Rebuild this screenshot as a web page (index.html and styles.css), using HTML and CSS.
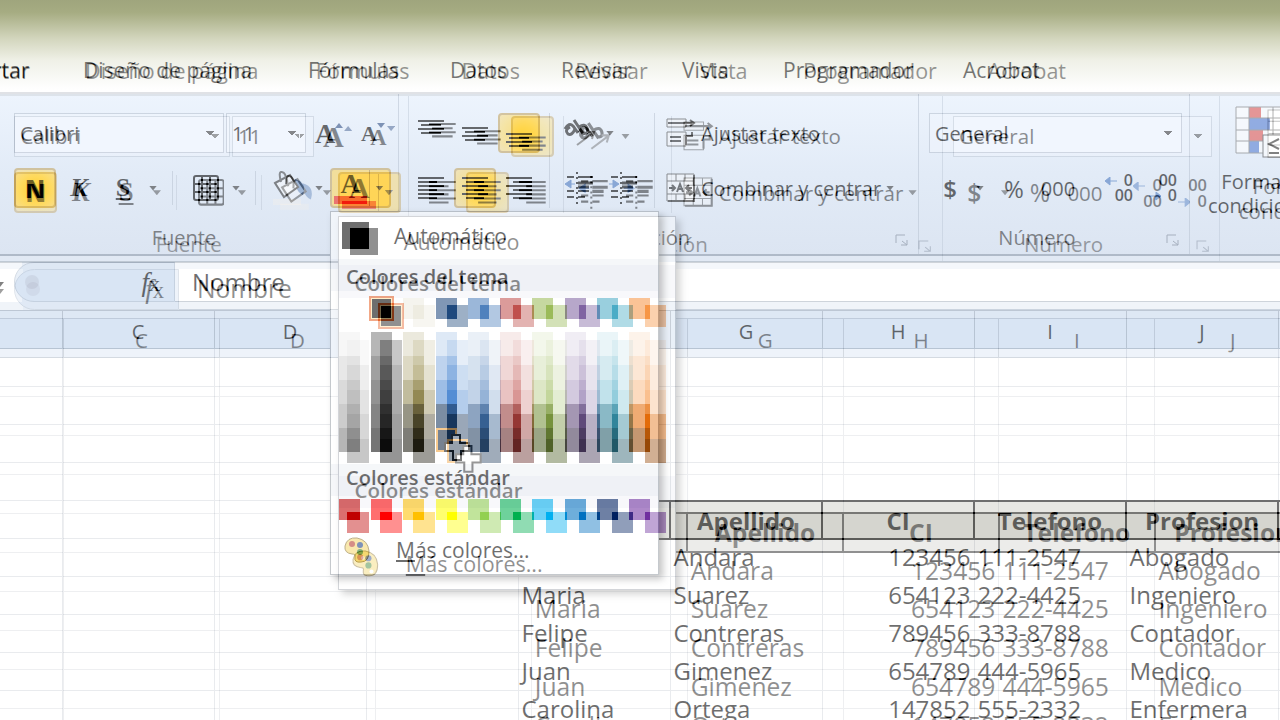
FILE: index.html
```
<!DOCTYPE html>
<html lang="es">
<head>
  <meta charset="UTF-8">
  <meta name="viewport" content="width=device-width, initial-scale=1.0">
  <title>Hoja de datos</title>
  <link rel="stylesheet" href="styles.css">
</head>
<body>

  <div class="frame">

    <!-- Ribbon tabs -->
    <nav class="tabs">
      <a href="#">rtar</a>
      <a href="#">Diseño de página</a>
      <a href="#">Fórmulas</a>
      <a href="#">Datos</a>
      <a href="#">Revisar</a>
      <a href="#">Vista</a>
      <a href="#">Programador</a>
      <a href="#">Acrobat</a>
    </nav>

    <div class="ribbon">

      <!-- Fuente -->
      <section class="group font-group">
        <div class="rows">
          <div class="row">
            <select class="combo font-name" aria-label="Fuente"><option>Calibri</option></select>
            <select class="combo font-size" aria-label="Tamaño"><option>11</option></select>
            <button class="tool grow" aria-label="Aumentar fuente">
              <span class="serif big">A</span><svg width="8" height="5"><path d="M0 5L4 0L8 5Z" fill="#2c4a80"/></svg>
            </button>
            <button class="tool shrink" aria-label="Disminuir fuente">
              <span class="serif small">A</span><svg width="8" height="5"><path d="M0 0L4 5L8 0Z" fill="#2c4a80"/></svg>
            </button>
          </div>
          <div class="row">
            <button class="tool active bold">N</button>
            <button class="tool serif italic">K</button>
            <button class="tool serif underline">S</button>
            <button class="caret" aria-label="Subrayado"></button>
            <span class="sep"></span>
            <button class="tool" aria-label="Bordes">
              <svg width="26" height="26" viewBox="0 0 26 26" fill="none" stroke="#000" stroke-width="2"><rect x="1" y="1" width="24" height="24" rx="2"/><path d="M9 1V25M17 1V25M1 9H25M1 17H25"/></svg>
            </button>
            <button class="caret" aria-label="Más bordes"></button>
            <span class="sep"></span>
            <button class="tool" aria-label="Color de relleno">
              <svg width="36" height="34" viewBox="0 0 36 34"><path d="M2 28H30V34H2Z" fill="#eee"/><path d="M24 8Q36 11 32 24Q27 22 24 14Z" fill="#5e83b8"/><path d="M4 12L19 4L27 16L13 26Z" fill="#f6f9fd" stroke="#333" stroke-width="2"/><path d="M10 11Q7 0 11 1Q16 2 15 13" fill="none" stroke="#444" stroke-width="2"/></svg>
            </button>
            <button class="caret" aria-label="Más rellenos"></button>

            <div class="split">
              <button class="color-btn" aria-label="Color de fuente"><span class="serif">A</span><i></i></button>
              <button class="caret" aria-label="Elegir color"></button>

              <!-- Font colour menu -->
              <div class="menu">
                <button class="menu-item auto"><i class="auto-color"></i><span>Automático</span></button>
                <h3>Colores del tema</h3>
                <div class="swatches theme"></div>
                <div class="swatches shades"></div>
                <h3 class="standard-title">Colores estándar</h3>
                <div class="swatches standard"></div>
                <button class="menu-item more">
                  <svg width="28" height="28" viewBox="0 0 28 28"><path d="M2 10Q4 1 14 2Q25 4 26 15Q26 26 18 26Q11 27 12 21Q13 18 9 18Q1 17 2 10Z" fill="#f5d870" stroke="#8b7230"/><circle cx="9" cy="8" r="3" fill="#b5392b"/><circle cx="17" cy="9" r="3" fill="#1c3f85"/><circle cx="17" cy="16" r="3" fill="#2b7a25"/><circle cx="20" cy="22" r="2" fill="#fff"/></svg>
                  <span><u>M</u>ás colores...</span>
                </button>
                <svg class="cursor" width="28" height="30" viewBox="0 0 28 30"><path d="M9 2H17V10H26V18H18V27H10V18H2V10H9Z" fill="#fff" stroke="#111" stroke-width="2"/></svg>
              </div>
            </div>
          </div>
        </div>
        <footer>Fuente<svg class="launcher" width="13" height="12"><path d="M1 9V1H10M7 7L12 11M12 6V11H6" fill="none" stroke="#7c8798"/></svg></footer>
      </section>

      <!-- Alineación -->
      <section class="group align-group">
        <div class="cols">
          <div class="rows">
            <div class="row">
              <button class="tool" aria-label="Alinear arriba"><svg width="28" height="30"><path d="M1 3H27M4 7H24M1 11H27M4 15H24" stroke="#000" stroke-width="2"/></svg></button>
              <button class="tool" aria-label="Alinear en el medio"><svg width="28" height="30"><path d="M1 10H27M4 14H24M1 18H27M4 22H24" stroke="#000" stroke-width="2"/></svg></button>
              <button class="tool active" aria-label="Alinear abajo"><svg width="28" height="30"><path d="M1 16H27M4 20H24M1 24H27M4 28H24" stroke="#000" stroke-width="2"/></svg></button>
            </div>
            <div class="row">
              <button class="tool" aria-label="Izquierda"><svg width="28" height="24"><path d="M1 2H27M1 6H20M1 10H27M1 14H20M1 18H27M1 22H20" stroke="#000" stroke-width="2"/></svg></button>
              <button class="tool active" aria-label="Centrar"><svg width="28" height="24"><path d="M1 2H27M5 6H23M1 10H27M5 14H23M1 18H27M5 22H23" stroke="#000" stroke-width="2"/></svg></button>
              <button class="tool" aria-label="Derecha"><svg width="28" height="24"><path d="M1 2H27M8 6H27M1 10H27M8 14H27M1 18H27M8 22H27" stroke="#000" stroke-width="2"/></svg></button>
            </div>
          </div>
          <span class="tall-sep"></span>
          <div class="rows">
            <div class="row">
              <button class="tool" aria-label="Orientación"><svg width="36" height="32" fill="none" stroke="#111"><path d="M3 12Q7 5 11 9L16 16M8 10Q2 13 6 17Q10 19 13 12M12 3L22 18M17 10Q23 6 25 11Q27 18 20 16" stroke-width="3"/><path d="M15 28L31 16M25 15L32 15L30 22" stroke="#666" stroke-width="2"/></svg></button>
              <button class="caret" aria-label="Más orientación"></button>
            </div>
            <div class="row">
              <button class="tool" aria-label="Disminuir sangría"><svg width="30" height="32" fill="none" stroke="#000" stroke-width="2"><path d="M12 0V32" stroke-dasharray="2 3"/><path d="M2 5H9M13 5H28M13 19H24M2 19H9M2 25H9M13 25H20"/><path d="M13 11H28M13 15H24" stroke-width="3"/><path d="M0 12L6 8V16ZM5 12H10" fill="#4574bd" stroke="#4574bd" stroke-width="1"/></svg></button>
              <button class="tool" aria-label="Aumentar sangría"><svg width="30" height="32" fill="none" stroke="#000" stroke-width="2"><path d="M12 0V32" stroke-dasharray="2 3"/><path d="M2 5H9M13 5H28M13 19H24M2 19H9M2 25H9M13 25H20"/><path d="M13 11H28M13 15H24" stroke-width="3"/><path d="M10 12L4 8V16ZM0 12H5" fill="#4574bd" stroke="#4574bd" stroke-width="1"/></svg></button>
            </div>
          </div>
          <span class="tall-sep"></span>
          <div class="rows wide">
            <div class="row">
              <button class="text-tool"><svg width="34" height="30" fill="none" stroke="#444"><path d="M1 1H20V9H1ZM1 14H20V28H1Z" fill="#f4f6f9"/><path d="M2 5H26M24 2L28 5L24 8M4 19H15M4 23H15M20 27V18M20 18H26V14" stroke="#222" stroke-width="2"/></svg>Ajustar texto</button>
            </div>
            <div class="row">
              <button class="text-tool"><svg width="34" height="30" fill="none" stroke="#444"><path d="M1 1H28V28H1ZM1 8H28M1 21H28M10 1V8M19 1V8M10 21V28M19 21V28" fill="#f4f6f9"/><path d="M28 2V28H2M3 15H8M26 15H21M6 12L9 15L6 18M23 12L20 15L23 18M11 19L14 11L17 19M12 16H17" stroke="#222" stroke-width="2"/></svg>Combinar y centrar</button>
              <button class="caret" aria-label="Más combinar"></button>
            </div>
          </div>
        </div>
        <footer>Alineación<svg class="launcher" width="13" height="12"><path d="M1 9V1H10M7 7L12 11M12 6V11H6" fill="none" stroke="#7c8798"/></svg></footer>
      </section>

      <!-- Número -->
      <section class="group number-group">
        <div class="rows">
          <div class="row">
            <select class="combo number-format" aria-label="Formato de número"><option>General</option></select>
          </div>
          <div class="row">
            <button class="tool currency">$</button>
            <button class="caret" aria-label="Más monedas"></button>
            <button class="tool percent">%</button>
            <button class="tool thousands">000</button>
            <button class="tool decimals" aria-label="Aumentar decimales"><span><svg width="12" height="9"><path d="M12 4H4M5 0L0 4L5 8Z" fill="#4574bd" stroke="#4574bd"/></svg>0</span><span>00</span></button>
            <button class="tool decimals" aria-label="Disminuir decimales"><span>00</span><span><svg width="12" height="9"><path d="M0 4H8M7 0L12 4L7 8Z" fill="#4574bd" stroke="#4574bd"/></svg>0</span></button>
          </div>
        </div>
        <footer>Número<svg class="launcher" width="13" height="12"><path d="M1 9V1H10M7 7L12 11M12 6V11H6" fill="none" stroke="#7c8798"/></svg></footer>
      </section>

      <!-- Estilos -->
      <section class="group style-group">
        <button class="large-tool">
          <svg width="52" height="52" viewBox="0 0 52 52"><path d="M1 1H51V47H1Z" fill="#fff"/><path d="M14 1H26V12H14ZM14 24H28V35H14Z" fill="#e0504a"/><path d="M14 12H35V24H14ZM14 35H24V47H14Z" fill="#4f78cf"/><path d="M1 1H51V47H1ZM1 12H51M1 24H51M1 35H51M14 1V47M38 1V47" fill="none" stroke="#777"/><rect x="28" y="29" width="22" height="22" fill="#fff" stroke="#444"/><path d="M44 33L34 38L44 43M34 47H44" fill="none" stroke="#222" stroke-width="2"/></svg>
          <span>Formato</span>
          <span>condicional</span>
        </button>
      </section>
    </div>

    <!-- Formula bar -->
    <div class="formula-bar">
      <span class="name-box"><i></i></span>
      <span class="fx-area"><i class="knob"></i><button class="fx"><i>f</i>x</button></span>
      <input class="formula" type="text" value="Nombre" aria-label="Barra de fórmulas">
    </div>

    <table class="sheet">
      <colgroup><col class="first"><col><col><col><col><col><col><col><col><col></colgroup>
      <thead>
        <tr><th></th><th>C</th><th>D</th><th>E</th><th>F</th><th>G</th><th>H</th><th>I</th><th>J</th><th>K</th></tr>
      </thead>
      <tbody>
        <tr><td></td><td></td><td></td><td></td><td></td><td></td><td></td><td></td><td></td><td></td></tr>
        <tr><td></td><td></td><td></td><td></td><td></td><td></td><td></td><td></td><td></td><td></td></tr>
        <tr><td></td><td></td><td></td><td></td><td></td><td></td><td></td><td></td><td></td><td></td></tr>
        <tr><td></td><td></td><td></td><td></td><td></td><td></td><td></td><td></td><td></td><td></td></tr>
        <tr class="titles"><td></td><td></td><td></td><td></td><th></th><th>Apellido</th><th>CI</th><th>Telefono</th><th>Profesion</th><th></th></tr>
        <tr><td></td><td></td><td></td><td></td><td></td><td>Andara</td><td class="num">123456</td><td>111-2547</td><td>Abogado</td><td></td></tr>
        <tr><td></td><td></td><td></td><td></td><td>Maria</td><td>Suarez</td><td class="num">654123</td><td>222-4425</td><td>Ingeniero</td><td></td></tr>
        <tr><td></td><td></td><td></td><td></td><td>Felipe</td><td>Contreras</td><td class="num">789456</td><td>333-8788</td><td>Contador</td><td></td></tr>
        <tr><td></td><td></td><td></td><td></td><td>Juan</td><td>Gimenez</td><td class="num">654789</td><td>444-5965</td><td>Medico</td><td></td></tr>
        <tr><td></td><td></td><td></td><td></td><td>Carolina</td><td>Ortega</td><td class="num">147852</td><td>555-2332</td><td>Enfermera</td><td></td></tr>
      </tbody>
    </table>
  </div>

  <script src="script.js"></script>
</body>
</html>
```
FILE: styles.css
```
* {
  box-sizing: border-box;
}

body {
  margin: 0;
  position: relative;
  height: 100vh;
  overflow: hidden;
  background: #fff;
  font-family: "Open Sans", "Noto Sans", sans-serif;
  font-size: 20px;
  color: #000;
}

button,
select,
input {
  font: inherit;
  color: inherit;
  padding: 0;
  margin: 0;
  border: 0;
  background: none;
}

.frame {
  position: relative;
  isolation: isolate;
  height: 100vh;
  overflow: hidden;
  background: #fff;
}

/* Zooming copy of the window, half faded in over the first one */
.frame.fading {
  position: absolute;
  top: 0;
  left: 0;
  width: 100%;
  zoom: 1.0256;
  opacity: 0.43;
  pointer-events: none;
}

/* Tabs */
.tabs {
  display: grid;
  grid-template-columns: 83px 225px 142px 111px 121px 101px 180px 1fr;
  height: 92px;
  padding-top: 56px;
  line-height: 28px;
  font-size: 21px;
  background: linear-gradient(#9fa57d 0, #a6ac82 12px, #d3d6bd 38px, #f0f1e8 60px, #fff 88px);
}

.tabs a {
  color: #111;
  text-decoration: none;
  white-space: nowrap;
}

.tabs a:first-child {
  margin-left: -7px;
}

/* Ribbon */
.ribbon {
  display: flex;
  height: 164px;
  border-top: 2px solid #c9cdd3;
  border-bottom: 2px solid #8e9aa9;
  background: linear-gradient(#edf4fd, #e2ebf7 50%, #dce5f2);
}

.group {
  flex: none;
  display: flex;
  flex-direction: column;
  padding-top: 19px;
  border-right: 1px solid #b9c4d3;
}

.font-group {
  width: 399px;
  padding-left: 14px;
}

.align-group {
  width: 520px;
  padding-left: 11px;
}

.number-group {
  width: 271px;
  padding-left: 10px;
}

.style-group {
  flex: 1;
  min-width: 0;
  padding: 12px 0 0 12px;
  border-right: 0;
  overflow: hidden;
}

.cols {
  display: flex;
}

.rows {
  display: flex;
  flex-direction: column;
  gap: 15px;
}

.row {
  display: flex;
  align-items: center;
  gap: 2px;
  height: 40px;
}

.group footer {
  position: relative;
  padding-right: 44px;
  margin-top: 16px;
  line-height: 28px;
  text-align: center;
  color: #333;
}

.launcher {
  position: absolute;
  right: 10px;
  top: 10px;
}

.combo {
  appearance: none;
  height: 40px;
  padding: 0 5px;
  border: 1px solid #b5bfcd;
  background-color: #f1f6fe;
  background-image: linear-gradient(to top right, transparent 50%, #333 50%), linear-gradient(to top left, transparent 50%, #333 50%);
  background-position: right 13px top 17px, right 9px top 17px;
  background-size: 4px 5px;
  background-repeat: no-repeat;
}

.font-name {
  width: 210px;
}

.font-size {
  width: 80px;
}

.number-format {
  width: 253px;
}

.tool {
  flex: none;
  display: flex;
  align-items: center;
  justify-content: center;
  width: 42px;
  height: 40px;
}

.active {
  border: 2px solid #c2a25b;
  border-radius: 4px;
  background: radial-gradient(#ffd02f, #ffdb62 60%, #f8dd8d);
}

.caret {
  flex: none;
  display: flex;
  align-items: center;
  justify-content: center;
  width: 14px;
  height: 40px;
}

.caret::after {
  content: "";
  width: 8px;
  height: 5px;
  background: #333;
  clip-path: polygon(0 0, 100% 0, 50% 100%);
}

.sep {
  width: 1px;
  height: 34px;
  margin: 0 10px;
  background: #bac4d2;
}

.tall-sep {
  width: 1px;
  margin: 0 9px;
  background: #bac4d2;
}

.tall-sep + .wide {
  margin-left: 2px;
}

.serif {
  font-family: "Liberation Serif", serif;
  font-weight: bold;
}

.big {
  font-size: 28px;
}

.small {
  font-size: 22px;
}

.grow,
.shrink {
  align-items: flex-start;
  line-height: 42px;
}

.grow svg,
.shrink svg {
  margin-top: 10px;
}

.bold {
  font-weight: 800;
  font-size: 24px;
}

.italic {
  font-style: italic;
  font-size: 26px;
}

.underline {
  text-decoration: underline;
  font-size: 26px;
}

.split {
  position: relative;
  display: flex;
  width: 61px;
  height: 40px;
  margin-left: 2px;
  border: 2px solid #c2a25b;
  border-radius: 4px;
  background: #ffd557;
}

.color-btn {
  width: 38px;
  height: 36px;
  border-right: 1px solid #b28a33;
  font-size: 28px;
  line-height: 24px;
}

.color-btn span,
.color-btn i {
  display: block;
}

.color-btn i {
  height: 8px;
  margin: 0 2px;
  background: #f21b0c;
}

.split > .caret {
  width: 19px;
  height: 36px;
}

.text-tool {
  display: flex;
  align-items: center;
  gap: 1px;
  white-space: nowrap;
}

.currency,
.percent {
  font-size: 24px;
}

.currency {
  font-weight: 600;
}

.percent {
  margin-left: 4px;
}

.thousands {
  font-family: "Open Sans", sans-serif;
}

.decimals {
  flex-direction: column;
  align-items: flex-end;
  padding-right: 7px;
  font-weight: 600;
  font-size: 16px;
  line-height: 15px;
}

.thousands + .decimals {
  margin-left: 17px;
}

.decimals svg {
  margin-right: 7px;
}

.large-tool {
  display: flex;
  flex-direction: column;
  align-items: center;
  width: 118px;
  line-height: 24px;
}

.large-tool svg {
  margin-bottom: 12px;
}

/* Font colour menu */
.menu {
  position: absolute;
  z-index: 5;
  top: 41px;
  left: -2px;
  width: 329px;
  height: 364px;
  border: 1px solid #9aa0a8;
  background: #fff;
  box-shadow: 4px 4px 7px rgba(0, 0, 0, 0.4);
}

.menu-item {
  display: flex;
  align-items: center;
  width: 100%;
  font-size: 21px;
}

.auto {
  height: 47px;
  padding-left: 11px;
}

.auto-color {
  width: 27px;
  height: 27px;
  margin-right: 25px;
  background: #000;
}

.menu h3 {
  margin: 0;
  padding-left: 15px;
  height: 32px;
  line-height: 36px;
  font-size: 20px;
  font-weight: 600;
  background: #eff1f6;
}

.swatches {
  display: flex;
  justify-content: space-between;
  padding: 0 8px;
}

.theme {
  padding-top: 7px;
}

.shades {
  padding-top: 13px;
}

.swatches button {
  display: block;
  width: 21px;
  height: 21px;
}

.shades button {
  height: 24px;
}

.theme .selected {
  outline: 2px solid #e9662c;
  border: 1px solid #ffe2a0;
}

.shades .hovered {
  border: 2px solid #f2a23a;
}

.menu .standard-title {
  margin-top: 12px;
  line-height: 28px;
}

.standard {
  padding-top: 3px;
}

.more {
  height: 50px;
  padding: 10px 0 0 12px;
  gap: 25px;
}

.cursor {
  position: absolute;
  left: 112px;
  top: 221px;
}

/* Formula bar */
.formula-bar {
  display: flex;
  height: 54px;
  padding: 6px 0 8px;
  background: #e6edf6;
}

.name-box {
  width: 22px;
  background: #fff;
}

.name-box i {
  display: block;
  width: 4px;
  margin-top: 20px;
  border: 4px solid transparent;
  border-left: 0;
  border-top: 5px solid #222;
}

.fx-area {
  display: flex;
  align-items: center;
  justify-content: space-between;
  width: 161px;
  margin-left: -8px;
  padding: 0 14px 0 10px;
  border: 1px solid #b6c2d1;
  border-radius: 20px 0 0 20px;
  background: #d9e5f4;
}

.knob {
  width: 14px;
  height: 14px;
  border-radius: 50%;
  background: #c5cddd;
}

.fx {
  font-family: "Liberation Serif", serif;
  font-size: 22px;
}

.fx i {
  font-size: 27px;
}

.formula {
  flex: 1;
  min-width: 0;
  padding-left: 17px;
  border-bottom: 1px solid #aab4c1;
  background: #fff;
  font-size: 24px;
}

/* Sheet */
.sheet {
  width: 1430px;
  table-layout: fixed;
  border-collapse: collapse;
  font-size: 24px;
}

.sheet col {
  width: 152px;
}

.sheet .first {
  width: 62px;
}

.sheet tr {
  height: 38px;
}

.sheet td {
  padding: 0 3px 2px;
  border: 1px solid #d9dce1;
  line-height: 28px;
}

.sheet thead th {
  padding: 4px 0 0;
  border: 1px solid #9eabbb;
  background: #d9e5f4;
  font-size: 20px;
  font-weight: normal;
}

.sheet td:first-child,
.sheet thead th:first-child {
  border-left: 0;
}

.sheet .num {
  text-align: right;
}

.sheet .titles th {
  padding: 2px 0 0;
  border: 2px solid #000;
  background: #d5d5cf;
  font-weight: bold;
  line-height: 28px;
}
```
FILE: script.js
```
const theme = ['#ffffff', '#000000', '#eeece1', '#1f497d', '#4f81bd', '#c0504d', '#9bbb59', '#8064a2', '#4bacc6', '#f79646'];
const shades = [
  ['#f2f2f2', '#d8d8d8', '#bfbfbf', '#a5a5a5', '#7f7f7f'],
  ['#7f7f7f', '#595959', '#3f3f3f', '#262626', '#0c0c0c'],
  ['#ddd9c3', '#c4bd97', '#938953', '#494429', '#1d1b10'],
  ['#c6d9f0', '#8db3e2', '#548dd4', '#17365d', '#0f243e'],
  ['#dbe5f1', '#b8cce4', '#95b3d7', '#366092', '#244061'],
  ['#f2dcdb', '#e5b9b7', '#d99694', '#953734', '#632423'],
  ['#ebf1dd', '#d7e3bc', '#c3d69b', '#76923c', '#4f6128'],
  ['#e5e0ec', '#ccc1d9', '#b2a2c7', '#5f497a', '#3f3151'],
  ['#dbeef3', '#b7dde8', '#92cddc', '#31859b', '#205867'],
  ['#fdeada', '#fbd5b5', '#fac08f', '#e36c09', '#974806']
];
const standard = ['#c00000', '#ff0000', '#ffc000', '#ffff00', '#92d050', '#00b050', '#00b0f0', '#0070c0', '#002060', '#7030a0'];

function addSwatch(parent, color, name) {
  const button = document.createElement('button');
  button.style.background = color;
  button.setAttribute('aria-label', color);
  if (name) button.className = name;
  parent.appendChild(button);
}

theme.forEach((color, i) => addSwatch(document.querySelector('.theme'), color, i === 1 ? 'selected' : ''));
standard.forEach(color => addSwatch(document.querySelector('.standard'), color));

shades.forEach((column, i) => {
  const div = document.createElement('div');
  column.forEach((color, j) => addSwatch(div, color, i === 3 && j === 4 ? 'hovered' : ''));
  document.querySelector('.shades').appendChild(div);
});

// second frame of the zoom transition
const frame = document.querySelector('.frame');
const copy = frame.cloneNode(true);
copy.classList.add('fading');
copy.setAttribute('aria-hidden', 'true');
copy.inert = true;
document.body.appendChild(copy);
```
